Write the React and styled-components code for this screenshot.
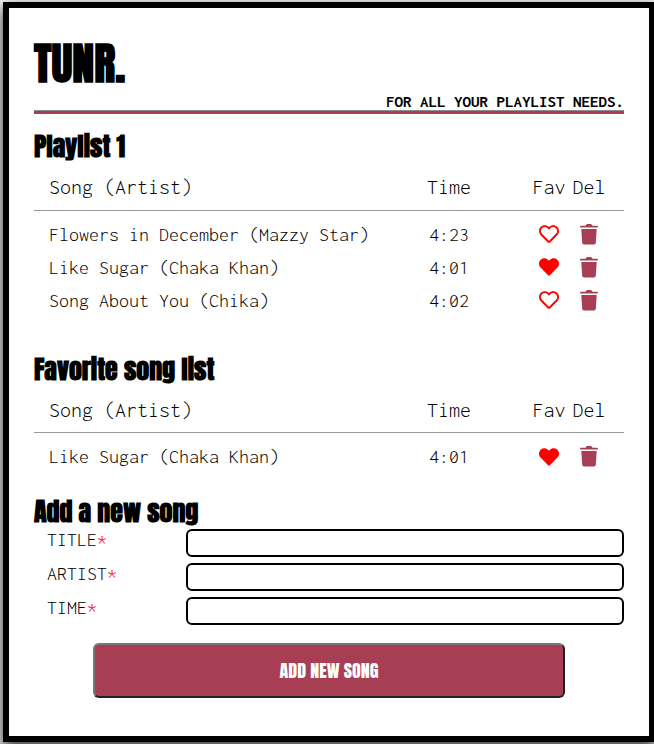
import React from "react";
import styled, { createGlobalStyle } from "styled-components";
import { FaHeart, FaRegHeart } from "react-icons/fa";

const maroon = "#a83e53";
const display = `Anton, "Liberation Sans Narrow", "DejaVu Sans Condensed", sans-serif`;
const mono = `Inconsolata, "Liberation Mono", monospace`;

const GlobalStyle = createGlobalStyle`
  *, *::before, *::after { box-sizing: border-box; }
  body {
    margin: 0;
    overflow-x: hidden;
    background: #fff;
    color: #000;
    font-family: ${mono};
    font-size: 20px;
    font-weight: 300;
  }
`;

const Card = styled.main`
  margin: 2px -1px 2px 3px;
  padding: 25px 25px 38px;
  border: 6px solid #000;
  background: #fff;
  box-shadow: 0 6px 14px 2px rgba(0, 0, 0, 0.75);
`;

const Logo = styled.h1`
  margin: 0;
  font: 700 44px/60px ${display};
`;

const Tagline = styled.p`
  margin: 0;
  font-size: 17px;
  font-weight: 700;
  line-height: 17px;
  text-align: right;
`;

const Rule = styled.hr`
  height: 4px;
  margin: 0 0 16px;
  border: 0;
  border-top: 1px solid #8c8c8c;
  background: ${maroon};
`;

const Section = styled.section`
  margin-bottom: ${(p) => p.$gap}px;
`;

const Heading = styled.h2`
  margin: 0 0 2px;
  font: 700 26px/32px ${display};
`;

const Table = styled.table`
  width: 100%;
  table-layout: fixed;
  border-collapse: collapse;
  text-align: center;

  th {
    height: 46px;
    padding: 0;
    border-bottom: 1px solid #9a9a9a;
    font-size: 22px;
    font-weight: 300;
  }
  td {
    height: 33px;
    padding: 0;
  }
  tbody::before {
    content: "";
    display: block;
    height: 7px;
  }
  tr > :nth-child(1) {
    padding-left: 15px;
    text-align: left;
  }
  tr > :nth-child(2) {
    width: 140px;
    padding-right: 20px;
  }
  tr > :nth-child(3) {
    width: 40px;
  }
  tr > :nth-child(4) {
    width: 55px;
    padding-right: 15px;
  }
`;

const IconButton = styled.button`
  display: block;
  margin: 0 auto;
  padding: 0;
  border: 0;
  background: none;
  color: ${(p) => p.$color};
  cursor: pointer;

  svg { display: block; }
`;

const Field = styled.div`
  display: flex;
  margin-bottom: 6px;
`;

const Label = styled.label`
  flex: 0 0 152px;
  padding-left: 13px;
  line-height: 22px;

  span { color: red; }
`;

const TextInput = styled.input`
  flex: 1;
  min-width: 0;
  height: 28px;
  padding: 2px 8px;
  border: 2px solid #000;
  border-radius: 6px;
  background: #fff;
  font: inherit;
`;

const Submit = styled.button`
  display: block;
  width: 80%;
  height: 55px;
  margin: 18px auto 0;
  border: 2px solid;
  border-color: #767676 #212121 #212121 #767676;
  border-radius: 6px;
  background: ${maroon};
  color: #fff;
  font: 400 18px/24px ${display};
  cursor: pointer;
`;

const TrashIcon = () => (
  <svg width="18" height="21" viewBox="0 0 18 21" fill="currentColor" aria-hidden="true">
    <path d="M5.5 1.7 6.4.4Q6.7 0 7.2 0h3.6q.5 0 .8.4l.9 1.3h4.7q.8 0 .8.9t-.8.9H.8Q0 3.500 0 2.600t.8-.9z" />
    <path d="M1.300 5h15.400l-.9 13.800q-.1 1.700-1.800 1.700H4q-1.700 0-1.800-1.700z" />
  </svg>
);

const playlist = [
  { title: "Flowers in December", artist: "Mazzy Star", time: "4:23", fav: false },
  { title: "Like Sugar", artist: "Chaka Khan", time: "4:01", fav: true },
  { title: "Song About You", artist: "Chika", time: "4:02", fav: false },
];

const fields = ["title", "artist", "time"];

function SongTable({ songs }) {
  return (
    <Table>
      <thead>
        <tr>
          <th scope="col">Song (Artist)</th>
          <th scope="col">Time</th>
          <th scope="col">Fav</th>
          <th scope="col">Del</th>
        </tr>
      </thead>
      <tbody>
        {songs.map((song) => (
          <tr key={song.title}>
            <td>{song.title} ({song.artist})</td>
            <td>{song.time}</td>
            <td>
              <IconButton type="button" $color="red" aria-label="Favorite" aria-pressed={song.fav}>
                {song.fav ? <FaHeart size={20} /> : <FaRegHeart size={20} />}
              </IconButton>
            </td>
            <td>
              <IconButton type="button" $color={maroon} aria-label="Delete">
                <TrashIcon />
              </IconButton>
            </td>
          </tr>
        ))}
      </tbody>
    </Table>
  );
}

export default function App() {
  return (
    <>
      <GlobalStyle />
      <Card>
        <header>
          <Logo>TUNR.</Logo>
          <Tagline>FOR ALL YOUR PLAYLIST NEEDS.</Tagline>
          <Rule />
        </header>
        <Section $gap={36}>
          <Heading>Playlist 1</Heading>
          <SongTable songs={playlist} />
        </Section>
        <Section $gap={22}>
          <Heading>Favorite song list</Heading>
          <SongTable songs={playlist.filter((song) => song.fav)} />
        </Section>
        <form onSubmit={(e) => e.preventDefault()}>
          <Heading>Add a new song</Heading>
          {fields.map((name) => (
            <Field key={name}>
              <Label htmlFor={name}>
                {name.toUpperCase()}
                <span>*</span>
              </Label>
              <TextInput id={name} name={name} type="text" required />
            </Field>
          ))}
          <Submit type="submit">ADD NEW SONG</Submit>
        </form>
      </Card>
    </>
  );
}
